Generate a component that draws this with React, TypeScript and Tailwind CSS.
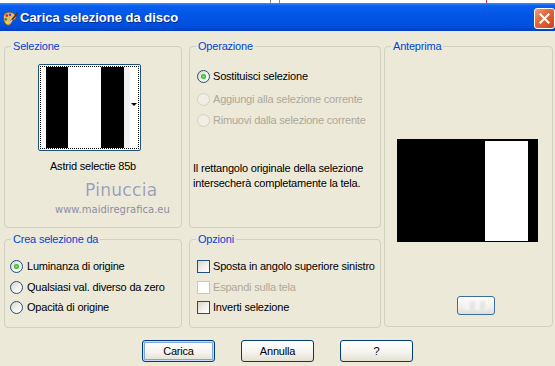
import React from "react";

function Radio({ checked, disabled }: { checked?: boolean; disabled?: boolean }) {
  return (
    <span
      className={
        disabled
          ? "w-[13px] h-[13px] rounded-full border border-[#d6d2c2] bg-[#f0eee5] shrink-0 flex items-center justify-center"
          : "w-[13px] h-[13px] rounded-full border border-[#1c5180] bg-[linear-gradient(135deg,#d8d5c9_0%,#f3f2ec_55%,#ffffff_100%)] shrink-0 flex items-center justify-center"
      }
    >
      {checked && (
        <span className="w-[5px] h-[5px] rounded-full bg-[radial-gradient(circle,#7bef7b_0%,#23a823_75%)]" />
      )}
    </span>
  );
}

function Check({ disabled }: { disabled?: boolean }) {
  return (
    <span
      className={
        disabled
          ? "w-[13px] h-[13px] border border-[#cac8bb] bg-[#ffffff] shrink-0"
          : "w-[13px] h-[13px] border border-[#1c5180] bg-[linear-gradient(135deg,#d8d6cb_0%,#f2f1ec_55%,#ffffff_100%)] shrink-0"
      }
    />
  );
}

function Group({
  title,
  className,
  children,
}: {
  title: string;
  className: string;
  children?: React.ReactNode;
}) {
  return (
    <fieldset className={"border border-[#d0d0bf] rounded-[4px] " + className}>
      <legend className="ml-[6px] px-[2px] text-[11px] leading-[12px] text-[#0046d5]">{title}</legend>
      {children}
    </fieldset>
  );
}

function PaletteIcon() {
  return (
    <svg width="16" height="16" viewBox="0 0 16 16">
      <path
        d="M1.5 6C1.5 3 4.2 1.2 7.5 1.2C11.2 1.2 14 3.4 14 6.6C14 8.7 12 9.3 10.3 9C9 8.8 8.5 9.7 9 10.8C9.6 12.2 8.6 14.2 6.3 14.2C3.2 14.2 1.5 10.5 1.5 6Z"
        fill="#e6b66a"
        stroke="#7a4a1a"
        strokeWidth="0.8"
      />
      <circle cx="4.8" cy="4.6" r="1.3" fill="#e02020" />
      <circle cx="8" cy="3.7" r="1.2" fill="#2050e0" />
      <circle cx="3.8" cy="8.2" r="1.3" fill="#20a020" />
      <circle cx="5.4" cy="11.4" r="1.2" fill="#f0e020" />
      <path d="M15.2 2.2L9.2 10" stroke="#5a3010" strokeWidth="1.7" strokeLinecap="round" />
      <path d="M9.6 9.4L8.3 11.4" stroke="#c8c8c8" strokeWidth="1.9" strokeLinecap="round" />
    </svg>
  );
}

function XpButton({ label, def }: { label: string; def?: boolean }) {
  return (
    <button
      className={
        def
          ? "w-[73px] h-[22px] rounded-[3px] border border-[#003c74] bg-[linear-gradient(to_bottom,#ffffff_0%,#f5f4ee_55%,#e3e0d2_100%)] shadow-[inset_0_0_0_1px_#c9dcf9,inset_0_0_0_2px_#7ea4e6] text-[11px] leading-[12px] text-black flex items-center justify-center"
          : "w-[73px] h-[22px] rounded-[3px] border border-[#003c74] bg-[linear-gradient(to_bottom,#ffffff_0%,#f5f4ee_55%,#e3e0d2_100%)] text-[11px] leading-[12px] text-black flex items-center justify-center"
      }
    >
      {label}
    </button>
  );
}

export default function App() {
  return (
    <div className="w-[555px] h-[366px] overflow-hidden flex flex-col bg-[#ece9d8] font-['Liberation_Sans',Arial,sans-serif] tracking-[-0.2px] select-none">
      {/* background strip */}
      <div className="h-[3px] bg-white flex shrink-0">
        <div className="ml-[270px] w-px bg-[#8a8a8a]" />
        <div className="ml-[8px] w-px bg-[#8a8a8a]" />
        <div className="ml-[206px] w-px bg-[#c8305a]" />
      </div>

      {/* title bar */}
      <div className="h-[28px] shrink-0 flex items-center bg-[linear-gradient(to_bottom,#3a8cf8_0%,#0a5fee_10%,#0055e5_45%,#0050df_80%,#0040c0_100%)]">
        <div className="ml-[2px] mt-[3px] w-[16px] h-[16px] flex">
          <PaletteIcon />
        </div>
        <span className="ml-[2px] mt-[2px] text-white font-bold text-[13px] leading-[16px] tracking-[0px] [text-shadow:1px_1px_0_#0a2a8a]">
          Carica selezione da disco
        </span>
        <div className="ml-auto mr-0 mt-[2px] w-[21px] h-[21px] rounded-[3px] border border-white bg-[linear-gradient(135deg,#f0a080_0%,#e06a40_40%,#c8441a_100%)] flex items-center justify-center">
          <svg width="11" height="11" viewBox="0 0 11 11">
            <path d="M1.5 1.5L9.5 9.5M9.5 1.5L1.5 9.5" stroke="white" strokeWidth="2" strokeLinecap="square" />
          </svg>
        </div>
      </div>

      {/* body */}
      <div className="flex-1 flex flex-col pt-[9px] text-[11px] leading-[13px] text-black">
        <div className="flex pl-[4px]">
          {/* column 1 */}
          <div className="w-[178px] flex flex-col">
            <Group title="Selezione" className="h-[188px]">
              <div className="flex flex-col">
                <div className="mt-[12px] ml-[33px] w-[103px] h-[87px] border border-[#1c5180] rounded-[2px] bg-white p-px">
                  <div className="w-full h-full border border-dotted border-black flex pl-[5px]">
                    <div className="w-[22px] bg-black" />
                    <div className="w-[33px] bg-white" />
                    <div className="w-[23px] bg-black" />
                    <div className="w-[6px] bg-[#f1f1f1]" />
                    <div className="flex-1 flex items-center justify-center">
                      <span className="w-0 h-0 border-l-[3px] border-r-[3px] border-t-[3px] border-l-transparent border-r-transparent border-t-black mt-[-6px]" />
                    </div>
                  </div>
                </div>
                <div className="mt-[9px] text-center">Astrid selectie 85b</div>
                <div className="mt-[8px] ml-[80px] font-['DejaVu_Sans',sans-serif] text-[17px] leading-[18px] tracking-[0.3px] text-[#9d9db4] [text-shadow:0_0_1px_#ffffff]">
                  Pinuccia
                </div>
                <div className="mt-[5px] ml-[50px] font-['DejaVu_Sans',sans-serif] text-[10px] leading-[12px] tracking-[0px] text-[#8e8ea2]">
                  www.maidiregrafica.eu
                </div>
              </div>
            </Group>
            <Group title="Crea selezione da" className="mt-[5px] h-[95px]">
              <div className="flex flex-col pl-[5px]">
                <div className="mt-[14px] h-[14px] flex items-center">
                  <Radio checked />
                  <span className="ml-[4px]">Luminanza di origine</span>
                </div>
                <div className="mt-[7px] h-[14px] flex items-center">
                  <Radio />
                  <span className="ml-[4px]">Qualsiasi val. diverso da zero</span>
                </div>
                <div className="mt-[6px] h-[14px] flex items-center">
                  <Radio />
                  <span className="ml-[4px]">Opacità di origine</span>
                </div>
              </div>
            </Group>
          </div>

          {/* column 2 */}
          <div className="ml-[7px] w-[192px] flex flex-col">
            <Group title="Operazione" className="h-[188px]">
              <div className="flex flex-col pl-[7px]">
                <div className="mt-[17px] h-[14px] flex items-center">
                  <Radio checked />
                  <span className="ml-[3px]">Sostituisci selezione</span>
                </div>
                <div className="mt-[9px] h-[14px] flex items-center text-[#aca899]">
                  <Radio disabled />
                  <span className="ml-[3px]">Aggiungi alla selezione corrente</span>
                </div>
                <div className="mt-[7px] h-[14px] flex items-center text-[#aca899]">
                  <Radio disabled />
                  <span className="ml-[3px]">Rimuovi dalla selezione corrente</span>
                </div>
                <div className="mt-[34px] ml-[-4px] leading-[15px]">
                  Il rettangolo originale della selezione
                  <br />
                  intersecherà completamente la tela.
                </div>
              </div>
            </Group>
            <Group title="Opzioni" className="mt-[5px] h-[95px]">
              <div className="flex flex-col pl-[7px]">
                <div className="mt-[14px] h-[14px] flex items-center">
                  <Check />
                  <span className="ml-[3px]">Sposta in angolo superiore sinistro</span>
                </div>
                <div className="mt-[7px] h-[14px] flex items-center text-[#aca899]">
                  <Check disabled />
                  <span className="ml-[3px]">Espandi sulla tela</span>
                </div>
                <div className="mt-[6px] h-[14px] flex items-center">
                  <Check />
                  <span className="ml-[3px]">Inverti selezione</span>
                </div>
              </div>
            </Group>
          </div>

          {/* column 3 */}
          <div className="ml-[3px] w-[169px]">
            <Group title="Anteprima" className="h-[287px]">
              <div className="flex flex-col">
                <div className="mt-[87px] ml-[12px] w-[141px] h-[103px] bg-black flex pl-[88px] pt-[2px] pb-[1px]">
                  <div className="w-[43px] bg-white" />
                </div>
                <div className="mt-[54px] ml-[72px] w-[38px] h-[19px] rounded-[3px] border border-[#3a6ea5] bg-[linear-gradient(to_bottom,#ffffff_0%,#f0efe9_60%,#e0ded4_100%)] flex items-center justify-center">
                  <div className="w-[22px] h-[9px] bg-[repeating-linear-gradient(90deg,#f7f7f7_0px,#f7f7f7_5px,#e2e2e2_5px,#e2e2e2_10px)] opacity-80 blur-[1px]" />
                </div>
              </div>
            </Group>
          </div>
        </div>

        {/* buttons */}
        <div className="mt-[12px] pl-[142px] flex gap-[26px]">
          <XpButton label="Carica" def />
          <XpButton label="Annulla" />
          <XpButton label="?" />
        </div>
      </div>
    </div>
  );
}
